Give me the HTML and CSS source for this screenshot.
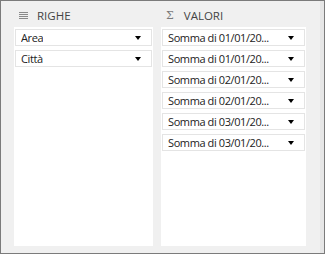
FILE: index.html
```html
<!DOCTYPE html>
<html lang="it">
<head>
    <meta charset="UTF-8">
    <title>Campi tabella pivot</title>
    <link rel="stylesheet" href="styles.css">
</head>
<body>
    <div class="pane">
        <div class="areas">
            <div class="area rows">
                <div class="area-title">
                    <svg class="area-icon" width="9" height="7" viewBox="0 0 9 7">
                        <rect x="0" y="0" width="9" height="1" fill="#8a8a8a"/>
                        <rect x="0" y="2" width="9" height="1" fill="#8a8a8a"/>
                        <rect x="0" y="4" width="9" height="1" fill="#8a8a8a"/>
                        <rect x="0" y="6" width="9" height="1" fill="#8a8a8a"/>
                    </svg>
                    <span>RIGHE</span>
                </div>
                <div class="area-box">
                    <div class="field"><span class="name">Area</span><i class="arrow"></i></div>
                    <div class="field"><span class="name">Città</span><i class="arrow"></i></div>
                </div>
            </div>
            <div class="area values">
                <div class="area-title">
                    <span class="sigma">Σ</span>
                    <span>VALORI</span>
                </div>
                <div class="area-box">
                    <div class="field"><span class="name">Somma di 01/01/20...</span><i class="arrow"></i></div>
                    <div class="field"><span class="name">Somma di 01/01/20...</span><i class="arrow"></i></div>
                    <div class="field"><span class="name">Somma di 02/01/20...</span><i class="arrow"></i></div>
                    <div class="field"><span class="name">Somma di 02/01/20...</span><i class="arrow"></i></div>
                    <div class="field"><span class="name">Somma di 03/01/20...</span><i class="arrow"></i></div>
                    <div class="field"><span class="name">Somma di 03/01/20...</span><i class="arrow"></i></div>
                </div>
            </div>
        </div>
        <div class="strip"></div>
    </div>
</body>
</html>
```

FILE: styles.css
```css
body {
    margin: 0;
    font-family: "Segoe UI", "Open Sans", "Noto Sans", sans-serif;
}
.pane {
    width: 325px;
    height: 254px;
    box-sizing: border-box;
    border: 1px solid #7b7b7b;
    background: #f0f0f0;
    display: flex;
}
.areas {
    flex: 1;
    display: flex;
    gap: 8px;
    padding-left: 13px;
}
.strip {
    width: 4px;
    background: #e6e6e6;
}
.area {
    display: flex;
    flex-direction: column;
}
.rows {
    width: 139px;
}
.values {
    width: 145px;
}
.area-title {
    height: 26px;
    display: flex;
    align-items: center;
    padding-left: 5px;
    padding-top: 2px;
    box-sizing: border-box;
    font-size: 11.5px;
    color: #444;
}
.area-icon {
    margin-right: 9px;
}
.sigma {
    font-family: "DejaVu Serif", serif;
    font-size: 11px;
    color: #7a7a7a;
    margin-right: 10px;
}
.area-box {
    height: 219px;
    box-sizing: border-box;
    background: #fff;
    padding: 2px 1px;
}
.field {
    height: 15px;
    border: 1px solid #e4e4e4;
    margin-bottom: 4px;
    padding: 0 10px 0 5px;
    display: flex;
    align-items: center;
    justify-content: space-between;
    font-size: 11px;
    letter-spacing: -0.4px;
    color: #222;
}
.name {
    white-space: nowrap;
    overflow: hidden;
}
.arrow {
    flex-shrink: 0;
    margin-left: 4px;
    width: 0;
    height: 0;
    border-left: 3.5px solid transparent;
    border-right: 3.5px solid transparent;
    border-top: 4px solid #000;
}
```
